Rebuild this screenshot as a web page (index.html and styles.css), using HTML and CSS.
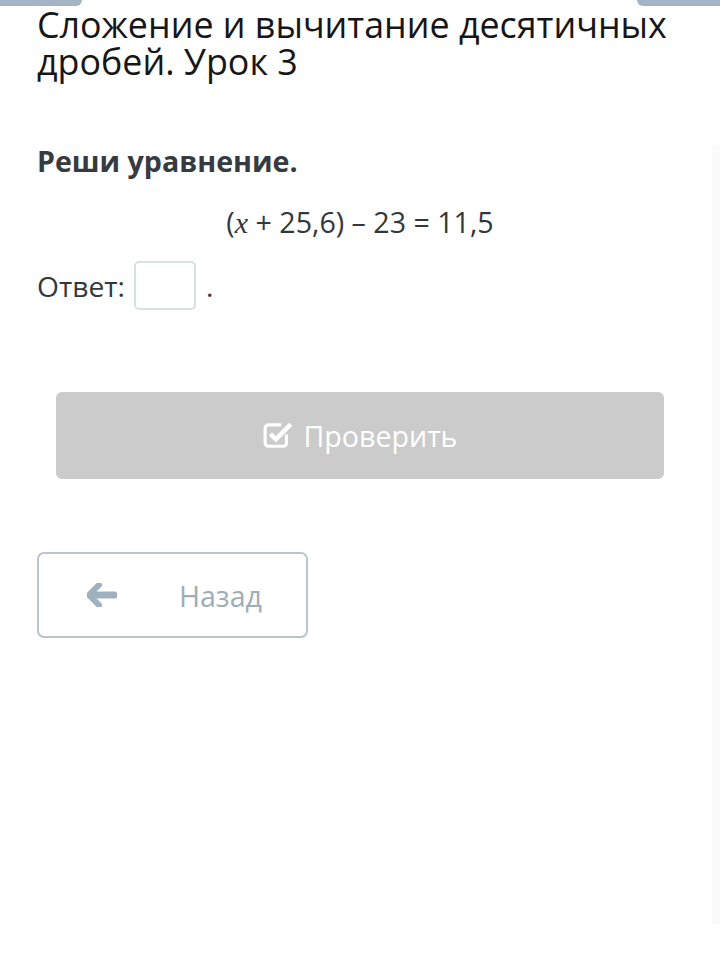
FILE: index.html
```html
<!DOCTYPE html>
<html lang="ru">
<head>
<meta charset="utf-8">
<link rel="stylesheet" href="styles.css">
</head>
<body>
<div class="page">
  <div class="topbar"><span class="tab"></span><span class="tab"></span></div>
  <h1 class="title">Сложение и вычитание десятичных<br>дробей. Урок 3</h1>
  <h2 class="task">Реши уравнение.</h2>
  <p class="equation">(<span class="var">x</span> + 25,6) – 23 = 11,5</p>
  <div class="answer">
    <span>Ответ:</span>
    <span class="input"></span>
    <span class="dot">.</span>
  </div>
  <div class="check-wrap">
    <button class="check">
      <svg class="check-icon" width="32" height="30" viewBox="0 0 30 28">
        <path d="M22 14.5 V22.5 a3 3 0 0 1 -3 3 H5 a3 3 0 0 1 -3 -3 V8.5 a3 3 0 0 1 3 -3 H17" fill="none" stroke="#fff" stroke-width="3"/>
        <path d="M7 14 L12 19 L26 5" fill="none" stroke="#fff" stroke-width="4.2" stroke-linejoin="miter"/>
      </svg>
      <span>Проверить</span>
    </button>
  </div>
  <div class="back-wrap">
    <button class="back">
      <svg class="arrow" width="30" height="24" viewBox="0 0 30 24">
        <path d="M12 2 L2 12 L12 22" fill="none" stroke="#9fb0bf" stroke-width="6" stroke-linecap="round" stroke-linejoin="round"/>
        <path d="M4 12 H27" fill="none" stroke="#9fb0bf" stroke-width="7" stroke-linecap="round"/>
      </svg>
      <span>Назад</span>
    </button>
  </div>
  <div class="side-strip"></div>
</div>
</body>
</html>
```
FILE: styles.css
```css
* { box-sizing: border-box; }
html, body { margin: 0; padding: 0; background: #fff; }
body { font-family: "Open Sans", "Noto Sans", sans-serif; }
.page { width: 720px; height: 956px; position: relative; overflow: hidden; }
.topbar { display: flex; justify-content: space-between; height: 6px; }
.tab { display: block; width: 82px; height: 6px; background: #a3b4c4; }
.tab:first-child { border-radius: 0 0 7px 0; }
.tab:last-child { width: 83px; border-radius: 0 0 0 7px; }
.title {
  margin: 0; padding: 0 37px;
  font-size: 35.8px; line-height: 37px; font-weight: 400; color: #161616;
  white-space: nowrap;
}
.task {
  margin: 64px 0 0; padding: 0 37px;
  font-size: 28.6px; line-height: 34px; font-weight: 700; color: #363b41;
}
.equation {
  margin: 26px 0 0; text-align: center;
  font-size: 28.6px; line-height: 36px; color: #33383d;
}
.var { font-family: "Liberation Serif", "DejaVu Serif", serif; font-style: italic; font-size: 30px; }
.answer {
  display: flex; align-items: center; gap: 9px;
  margin: 20px 0 0; padding: 0 37px;
  font-size: 28.2px; color: #33383d;
}
.input {
  display: block; width: 62px; height: 49px;
  border: 2px solid #d9e0e2; border-radius: 5px; background: #fff;
}
.dot { margin-left: 1px; }
.check-wrap { padding: 0 56px; margin-top: 82px; }
.check {
  width: 100%; height: 87px; border: 0; border-radius: 6px;
  background: #cbcbcb; color: #fff;
  display: flex; align-items: center; justify-content: center; gap: 9px;
  font-family: "Open Sans", sans-serif; font-size: 28.6px;
}
.check-icon { margin-top: -4px; }
.back-wrap { padding: 0 37px; margin-top: 73px; }
.back {
  width: 271px; height: 86px; background: #fff;
  border: 2px solid #b9c5ce; border-radius: 7px;
  display: flex; align-items: center; padding: 0 44px 0 48px;
  justify-content: space-between;
  font-family: "Open Sans", sans-serif; font-size: 28.6px; color: #9fadb7;
}
.side-strip {
  position: absolute; right: 0; top: 145px; width: 8px; height: 780px; background: #fbfbfb;
}
```
